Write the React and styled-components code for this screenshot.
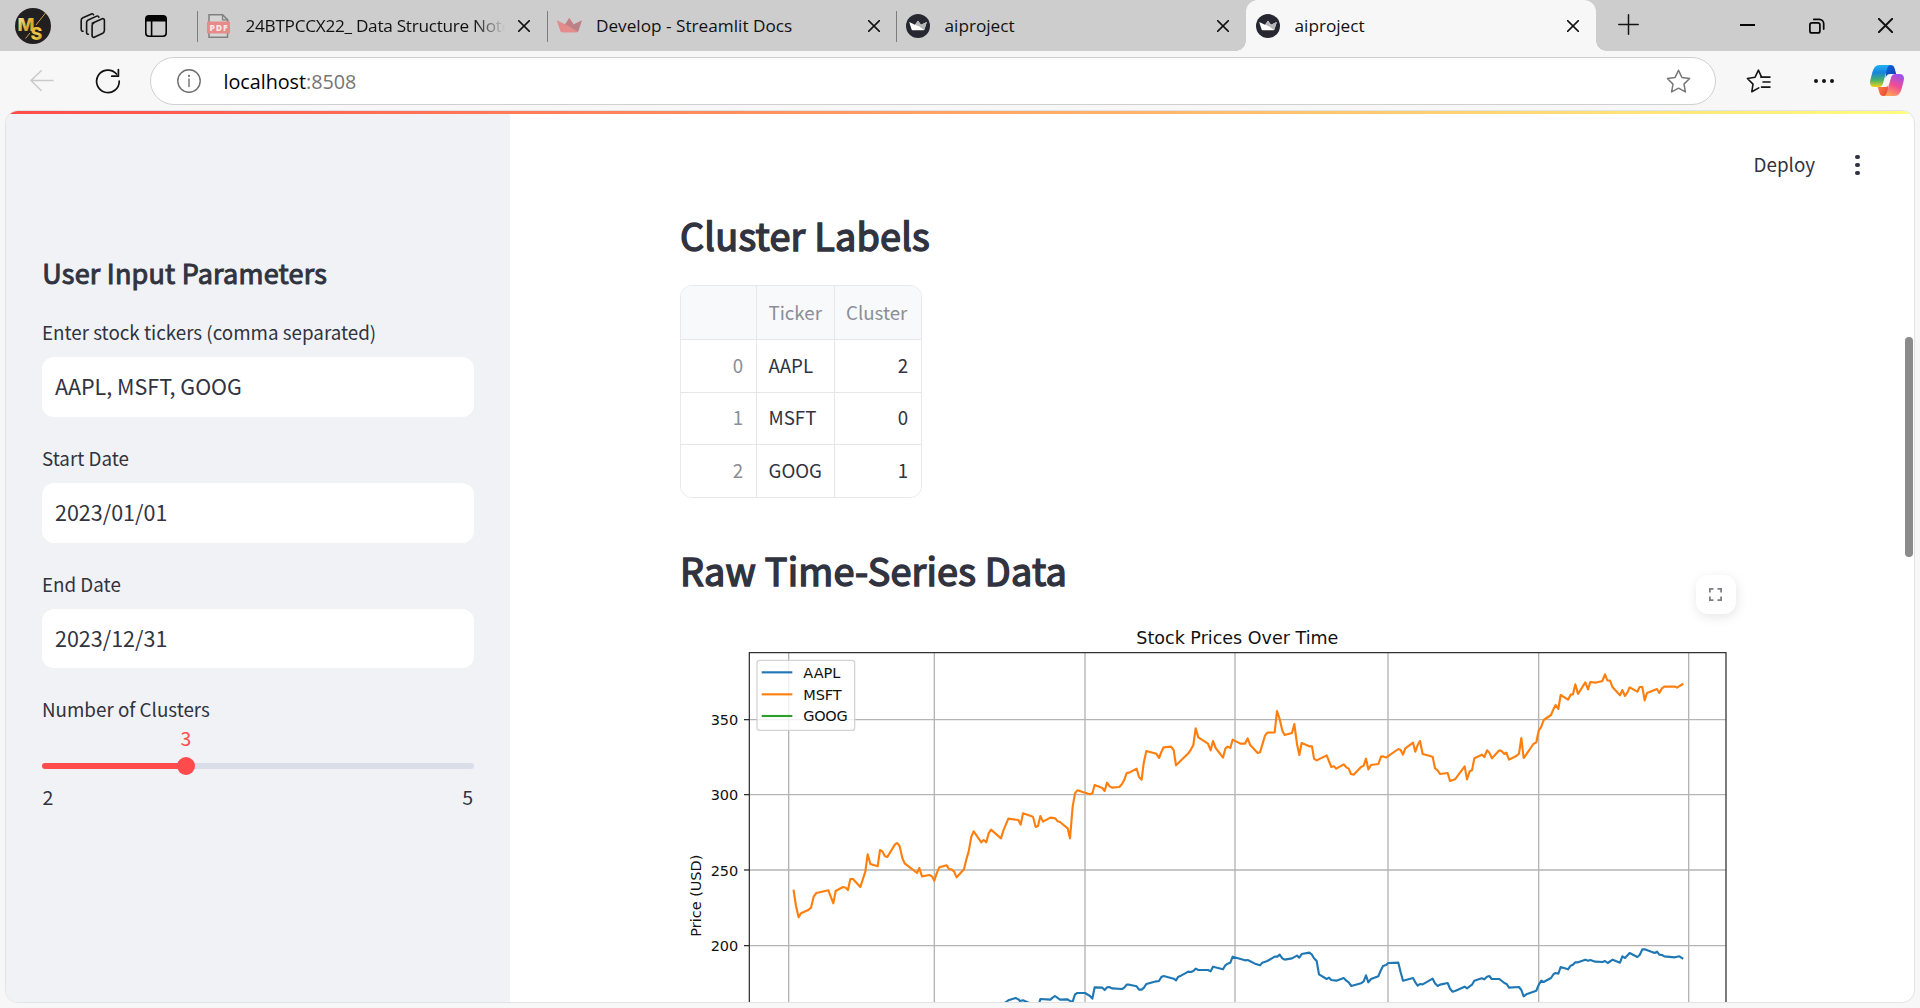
import React from "react";
import styled, { createGlobalStyle } from "styled-components";

const Global = createGlobalStyle`
  * { box-sizing: border-box; }
  html, body { margin: 0; padding: 0; }
  body { background: #f7f7f7; overflow: hidden; }
  svg { display: block; flex: none; }
`;

const ui = `"Open Sans", "Noto Sans", sans-serif`;
const app = `"Noto Sans CJK SC", "Noto Sans", sans-serif`;

/* ---------- browser window ---------- */

const Window = styled.div`
  width: 1920px;
  height: 1008px;
  display: flex;
  flex-direction: column;
  background: #f7f7f7;
  overflow: hidden;
  font-family: ${ui};
`;

const TabStrip = styled.div`
  height: 51px;
  flex: none;
  display: flex;
  background: #cdcdcd;
`;

const StripTools = styled.div`
  width: 197px;
  padding: 8px 0 0 15px;
  display: flex;
  align-items: flex-start;
`;

const ToolSlot = styled.div`
  width: ${(p) => p.$w}px;
  margin-left: ${(p) => p.$ml || 0}px;
  padding-left: ${(p) => p.$pl || 0}px;
  padding-top: ${(p) => p.$top || 0}px;
`;

const Tab = styled.div`
  width: ${(p) => p.$w || 349.5}px;
  height: 51px;
  padding-left: 10px;
  display: flex;
  align-items: center;
  position: relative;
  background: ${(p) => (p.$active ? "#f7f7f7" : "transparent")};
  border-radius: ${(p) => (p.$active ? "12px 12px 0 0" : "0")};
  &::before {
    content: "";
    display: ${(p) => (p.$active ? "none" : "block")};
    position: absolute;
    left: 0;
    top: 11px;
    width: 1px;
    height: 31px;
    background: #7d7d7d;
  }
`;

const Flare = styled.i`
  position: absolute;
  bottom: 0;
  ${(p) => (p.$side === "left" ? "left: -10px;" : "right: -10px;")}
  width: 10px;
  height: 10px;
  background: radial-gradient(circle at ${(p) => (p.$side === "left" ? "0 0" : "100% 0")}, #cdcdcd 9.5px, #f7f7f7 10px);
`;

const TabTitle = styled.div`
  width: ${(p) => p.$w || 260}px;
  margin-left: ${(p) => p.$ml || 14}px;
  font-size: 17.2px;
  letter-spacing: ${(p) => p.$ls || 0}px;
  line-height: 26px;
  padding-top: 1px;
  color: #111;
  white-space: nowrap;
  overflow: hidden;
  ${(p) => p.$fade && "-webkit-mask-image: linear-gradient(90deg, #000 88%, transparent 100%);"}
`;

const TabClose = styled.div`
  margin-left: ${(p) => p.$ml || 12}px;
`;

const StripEnd = styled.div`
  flex: 1;
  display: flex;
  align-items: flex-start;
`;

const Toolbar = styled.div`
  height: 59px;
  flex: none;
  display: flex;
  align-items: center;
  background: #f7f7f7;
`;

const Omnibox = styled.div`
  width: 1566px;
  height: 48px;
  margin-left: 29px;
  margin-top: 1px;
  padding: 0 24px 0 26px;
  display: flex;
  align-items: center;
  background: #fff;
  border: 1px solid #d0d0d0;
  border-radius: 24px;
`;

const Address = styled.div`
  flex: 1;
  margin-left: 22.5px;
  padding-top: 1px;
  font-size: 19.8px;
  letter-spacing: -0.04px;
  line-height: 28px;
  color: #000;
  span { color: #757575; }
`;

const Page = styled.div`
  width: 1910px;
  height: 893px;
  margin-left: 5px;
  flex: none;
  display: flex;
  flex-direction: column;
  position: relative;
  border: 1px solid #e1e3e5;
  border-radius: 13px;
  overflow: hidden;
  background: #fff;
  font-family: ${app};
  color: #31333f;
`;

const Decoration = styled.div`
  height: 3px;
  flex: none;
  background: linear-gradient(90deg, rgb(255, 75, 75), rgb(255, 253, 128));
`;

const Body = styled.div`
  flex: 1;
  min-height: 0;
  display: flex;
`;

const ScrollThumb = styled.div`
  position: absolute;
  right: 1px;
  top: 226px;
  width: 8px;
  height: 220px;
  border-radius: 4px;
  background: #8b8b8b;
`;

/* ---------- sidebar ---------- */

const Sidebar = styled.aside`
  width: 504px;
  flex: none;
  padding: 141px 36px 0;
  background: #f0f2f6;
`;

const SideTitle = styled.h2`
  margin: 0 0 26px;
  padding-left: 0.3px;
  font-size: 27px;
  line-height: 36px;
  font-weight: 400;
  letter-spacing: 0.2px;
  -webkit-text-stroke: 1px #31333f;
  white-space: nowrap;
`;

const Field = styled.div`
  margin-bottom: ${(p) => p.$mb || 26}px;
`;

const Label = styled.div`
  margin-bottom: ${(p) => (p.$tight ? 0 : 10)}px;
  font-size: 18.8px;
  line-height: 30px;
  white-space: nowrap;
`;

const Input = styled.div`
  height: ${(p) => p.$h || 60}px;
  padding: 0 13px 3px;
  display: flex;
  align-items: center;
  border-radius: 12px;
  background: #fff;
  font-size: 21.5px;
`;

const SliderValue = styled.div`
  width: 288px;
  font-size: 19.4px;
  line-height: 28px;
  text-align: center;
  color: #ff4b4b;
`;

const Track = styled.div`
  height: 6px;
  margin: 11px 0 14px;
  border-radius: 3px;
  background: linear-gradient(90deg, #ff4b4b 33.33%, #d9dee9 33.33%);
  position: relative;
`;

const Knob = styled.div`
  position: absolute;
  left: 135px;
  top: -6px;
  width: 18px;
  height: 18px;
  border-radius: 50%;
  background: #ff4b4b;
`;

const Range = styled.div`
  display: flex;
  justify-content: space-between;
  padding: 0 1px 0 0.5px;
  font-size: 19.6px;
  line-height: 28px;
`;

/* ---------- main column ---------- */

const Main = styled.main`
  flex: 1;
  min-width: 0;
  display: flex;
  flex-direction: column;
`;

const Header = styled.header`
  height: 90px;
  flex: none;
  padding: 35px 55px 0 0;
  display: flex;
  justify-content: flex-end;
  font-size: 18.8px;
  line-height: 30px;
`;

const Dots = styled.div`
  width: 4px;
  margin-left: 40px;
  padding-top: 5.5px;
  display: flex;
  flex-direction: column;
  gap: 3.5px;
  i { width: 4.5px; height: 4.5px; border-radius: 50%; background: #31333f; }
`;

const Content = styled.div`
  width: 1056px;
  margin-left: 170px;
  position: relative;
`;

const Heading = styled.h2`
  margin: ${(p) => p.$top || 0}px 0 0;
  font-size: 37.8px;
  line-height: 50px;
  font-weight: 400;
  letter-spacing: 0.22px;
  -webkit-text-stroke: 1.5px #31333f;
  white-space: nowrap;
`;

const Table = styled.div`
  width: 242px;
  margin-top: 25px;
  display: grid;
  grid-template-columns: 76px 78px 1fr;
  grid-template-rows: 54px 52.5px 52.5px 52px;
  border: 1px solid #e8e9eb;
  border-radius: 12px;
  overflow: hidden;
  font-size: 18.7px;
`;

const Cell = styled.div`
  display: flex;
  align-items: center;
  justify-content: ${(p) => (p.$right ? "flex-end" : "flex-start")};
  padding: 0 13px 3px ${(p) => (p.$lastCol ? 11 : 11.5)}px;
  background: ${(p) => (p.$head ? "#f8f9fb" : "#fff")};
  color: ${(p) => (p.$muted ? "#8b8e96" : "#31333f")};
  border-right: ${(p) => (p.$lastCol ? "0" : "1px solid #e5e6e9")};
  border-bottom: ${(p) => (p.$lastRow ? "0" : "1px solid #e5e6e9")};
`;

const Fullscreen = styled.button`
  position: absolute;
  left: 1016px;
  top: 371px;
  width: 40px;
  height: 39px;
  padding: 0 1px 0 0;
  border: 0;
  border-radius: 12px;
  background: #fff;
  box-shadow: 1px 3px 12px rgba(0, 0, 0, 0.1);
  display: flex;
  align-items: center;
  justify-content: center;
`;

const ChartBox = styled.div`
  margin-top: 25px;
  height: 382px;
`;

/* ---------- icons ---------- */

const Cross = ({ size = 12, w = 1.5 }) => (
  <svg width={size} height={size} viewBox="0 0 12 12" stroke="#111" strokeWidth={w} strokeLinecap="round">
    <path d="M.6.6 11.4 11.4M11.4.6.6 11.4" />
  </svg>
);

const Profile = () => (
  <svg width="36" height="36" viewBox="0 0 36 36">
    <defs>
      <linearGradient id="gold" x1="0" y1="0" x2="1" y2="1">
        <stop offset="0" stopColor="#fff3a0" />
        <stop offset=".45" stopColor="#d9a32c" />
        <stop offset=".75" stopColor="#f3cf4c" />
        <stop offset="1" stopColor="#a66f12" />
      </linearGradient>
    </defs>
    <circle cx="18" cy="18" r="18" fill="#221f20" />
    <text fontFamily="Inter, sans-serif" fontWeight="800" fontSize="18" fill="url(#gold)">
      <tspan x="2.500" y="22.500">M</tspan>
      <tspan x="15.500" y="32">S</tspan>
    </text>
    <path d="M28 7 21 16" stroke="#221f20" strokeWidth="2.400" />
    <path d="M30.500 5 21 17M15 25 10.500 30.500" stroke="#d0a33a" strokeWidth="1" />
  </svg>
);

const Workspaces = () => (
  <svg width="26" height="26" viewBox="0 0 26 26" fill="none" stroke="#151515" strokeWidth="1.6" strokeLinejoin="round" strokeLinecap="round">
    <path d="M12.200 10.200 22.300 5.800a1.500 1.500 0 0 1 2.100 1.400v10.400a3 3 0 0 1-1.600 2.600l-8.600 4a1.500 1.500 0 0 1-2.100-1.300V12.600a2.800 2.800 0 0 1 1.700-2.600z" />
    <path d="M18.800 4.100a1.500 1.500 0 0 0-2.100-1L8.200 7a2.800 2.800 0 0 0-1.600 2.600v10.200c0 1 .8 1.600 1.800 1.500" />
    <path d="M13.500 1.700a1.500 1.500 0 0 0-2-.8L2.900 4.800A2.800 2.800 0 0 0 1.200 7.400v9.200c0 1 .8 1.700 1.900 1.600" />
  </svg>
);

const TabActions = () => (
  <svg width="22" height="22" viewBox="0 0 22 22" fill="none">
    <rect x=".8" y=".8" width="20.400" height="20.400" rx="3.200" stroke="#050505" strokeWidth="1.600" />
    <path d="M.8 6.500V4A3.200 3.200 0 0 1 4 .8h14A3.200 3.200 0 0 1 21.200 4v2.500z" fill="#050505" />
    <path d="M6.600 6v15" stroke="#050505" strokeWidth="1.600" />
  </svg>
);

const Pdf = () => (
  <svg width="23" height="24" viewBox="0 0 23 24">
    <path d="M2 .8h13.500l5 5V23.200H2z" fill="#d6d6d6" stroke="#808080" strokeWidth="1.500" />
    <path d="M15.500.8v5h5z" fill="#cdcdcd" stroke="#808080" strokeWidth="1.300" />
    <rect x="0" y="7.500" width="23" height="12" rx=".8" fill="#e68a8a" />
    <text x="2.400" y="16.700" fontFamily="Open Sans, sans-serif" fontWeight="800" fontSize="8.600" textLength="18.200" fill="#f6e4e4">PDF</text>
  </svg>
);

const Crown = () => (
  <svg width="25" height="15" viewBox="0 0 25 15">
    <path d="M0 2.500 8 6.500 12.300 0 16.600 6.500 24.800 2.500 21.300 13q-.4 1.200-1.800 1.200H5.300q-1.400 0-1.800-1.200z" fill="#e48c8c" />
    <path d="M12.300 0 16.600 6.500 13 9 8 6.500z" fill="#c08088" />
    <path d="M24.800 2.500 16.600 6.500 13 9l7.500 5q.6-.3.8-1z" fill="#b98188" />
    <path d="M0 2.500 13 9 21 13.800q-.5.400-1.500.4H5.300q-1.400 0-1.800-1.200z" fill="#e48b8b" />
  </svg>
);

const CrownBadge = () => (
  <svg width="24" height="24" viewBox="0 0 24 24">
    <circle cx="12" cy="12" r="12" fill="#262730" />
    <path d="M3.200 8 9 10.800 12 6.700 15 10.800 20.800 8 18.400 15.500q-.2.700-1 .7H6.600q-.8 0-1-.7z" fill="#fff" />
    <path d="M20.800 8 15 10.800l-2 1.400 5 3.800q.3-.2.400-.5zM12 6.700 15 10.800l-2 1.400-4-1.400z" fill="#b5b5b9" />
  </svg>
);

const Plus = () => (
  <svg width="21" height="21" viewBox="0 0 21 21" stroke="#151515" strokeWidth="1.500" strokeLinecap="round">
    <path d="M10.500.8v19.400M.8 10.500h19.400" />
  </svg>
);

const Restore = () => (
  <svg width="16" height="16" viewBox="0 0 16 16" fill="none" stroke="#050505" strokeWidth="1.700" strokeLinecap="round">
    <rect x=".9" y="4.900" width="10" height="10" rx="2" />
    <path d="M4.800 1.400h5.500a4.400 4.400 0 0 1 4.400 4.400v5.300" />
  </svg>
);

const Back = () => (
  <svg width="24" height="22" viewBox="0 0 24 22" fill="none" stroke="#cacaca" strokeWidth="1.500" strokeLinecap="round" strokeLinejoin="round">
    <path d="M23 10.500H1M11.200.8 1 10.500l10.200 10" />
  </svg>
);

const Reload = () => (
  <svg width="26" height="26" viewBox="0 0 26 26" fill="none" stroke="#111" strokeWidth="1.700" strokeLinecap="round" strokeLinejoin="round">
    <path d="M24.200 13A11.300 11.300 0 1 1 21.500 6" />
    <path d="M23.400 1.600v6.600h-6.600" />
  </svg>
);

const Info = () => (
  <svg width="24" height="24" viewBox="0 0 24 24" fill="none" stroke="#6e6e6e" strokeWidth="1.400">
    <circle cx="12" cy="12" r="11.200" />
    <path d="M12 10v7.600" strokeLinecap="round" />
    <circle cx="12" cy="6.900" r="1.100" fill="#6e6e6e" stroke="none" />
  </svg>
);

const Star = () => (
  <svg width="25" height="24" viewBox="0 0 25 24" fill="none" stroke="#777" strokeWidth="1.500" strokeLinejoin="round">
    <path d="M12.500 1.200 15.900 8.400 23.600 9.500 18 15.100 19.400 22.900 12.500 19.200 5.600 22.900 7 15.100 1.400 9.500 9.100 8.400z" />
  </svg>
);

const Favorites = () => (
  <svg width="25" height="24" viewBox="0 0 25 24" fill="none" stroke="#151515" strokeWidth="1.600" strokeLinejoin="round" strokeLinecap="round">
    <path d="M15.600 8.100 12.400 1.200 9.100 8.200 1.400 9.500 7 15.100 5.800 22.800 12.800 18.900" />
    <path d="M14.800 8.100h9.200M17 13h7M15.500 18.100h8.500" />
  </svg>
);

const Copilot = () => (
  <svg width="34" height="31" viewBox="0 0 34 31">
    <defs>
      <linearGradient id="cpA" x1="0" y1="0" x2="0" y2="1">
        <stop offset="0" stopColor="#1fb2f5" />
        <stop offset=".35" stopColor="#1784dc" />
        <stop offset=".68" stopColor="#45b16c" />
        <stop offset="1" stopColor="#f2cf15" />
      </linearGradient>
      <linearGradient id="cpB" x1=".7" y1="0" x2=".3" y2="1">
        <stop offset="0" stopColor="#9c50f0" />
        <stop offset=".5" stopColor="#ee4d95" />
        <stop offset="1" stopColor="#ffa356" />
      </linearGradient>
      <linearGradient id="cpC" x1="0" y1="0" x2="1" y2="1">
        <stop offset="0" stopColor="#0a68d8" />
        <stop offset="1" stopColor="#1737b5" />
      </linearGradient>
      <linearGradient id="cpD" x1="0" y1="0" x2="1" y2="1">
        <stop offset="0" stopColor="#ff8f42" />
        <stop offset="1" stopColor="#e63b3b" />
      </linearGradient>
    </defs>
    <path d="M16 0h4.500c2.600 0 3.600 1.500 4.300 4l1.400 5h-5.700c-3 0-4 1.200-4.800 4z" fill="url(#cpC)" />
    <path d="M18 31h-4.500c-2.600 0-3.600-1.500-4.300-4l-1.500-5h5.800c3 0 4-1.200 4.800-4z" fill="url(#cpD)" />
    <path d="M20 0H9.500C5.500 0 3.600 3 2.300 7.500L.6 14c-1.500 5-.2 8 4 8h3.700c3 0 4-1.400 4.800-4l3.500-12.500C17.400 2.400 18 .5 20 0z" fill="url(#cpA)" />
    <path d="M14 31h10.500c4 0 5.900-3 7.200-7.500l1.700-6.500c1.500-5 .2-8-4-8h-3.700c-3 0-4 1.400-4.800 4l-3.500 12.500C16.600 28.600 16 30.500 14 31z" fill="url(#cpB)" />
    <path d="M18.500 10.500h3.200c-.8.600-1.100 1.600-1.500 3l-2 7c-.4 1-1 1.300-2.200 1.300h-3.200c1.200-.8 1.500-2 2-3.600l1.600-5.600c.4-1.300.9-2.100 2.100-2.100z" fill="#f7f7f7" />
  </svg>
);

/* ---------- chart ---------- */

// Each run of points is relative to its own origin; the plot uses three units per pixel.
const join = (runs) =>
  runs
    .map(([ox, oy, pts]) =>
      pts.trim().split(/\s+/).map((p) => {
        const [x, y] = p.split(",").map(Number);
        return `${x + ox},${y + oy}`;
      }).join(" ")
    )
    .join(" ");

const MSFT = join([
  [2040, 1890, `341,782 348,828 356,862 363,850 385,840 393,833 401,800 409,789 445,781 460,820 467,783 489,771 497,773 504,780 511,747 519,747 541,771 556,725 563,673 571,702 593,709 600,660 607,664 615,679 622,681 645,643 652,639 659,649 667,684 674,700 711,729 718,714 726,739 748,735 756,739 763,752 770,730 778,712 800,706 807,717 814,718 822,724 830,742 852,718 859,688 866,665 874,620 881,604 904,637 911,630 919,637 926,610 933,599 963,625 970,602 985,566 1015,570 1022,584 1029,550 1059,560 1067,591 1074,588 1081,558 1089,575 1111,563 1126,565 1133,574 1140,576 1163,595 1170,625`],
  [3180, 1890, `38,530 45,490 52,481 75,488 90,493 97,490 104,465 127,474 134,483 141,458 149,469 156,473 178,471 186,462 193,449 200,429 208,428 230,416 237,441 245,449 251,400 259,363 289,371 297,384 304,366 311,352 333,350 341,360 348,406 385,370 393,358 400,345 407,295 415,322 444,341 452,361 459,333 467,354 489,383 496,356 503,350 511,354 518,329 541,341 555,341 563,325 570,344 593,369 600,367 607,344 615,317 622,308 644,307 651,243 659,267 667,302 674,315 696,309 703,282 711,342 718,375 725,339 748,349 756,349 762,386 770,391 800,376 814,411 822,409 829,416 851,403 859,412 866,416 873,432 881,434 903,411 911,407 918,386 925,418 933,405 955,402 963,380 970,379 978,383 1015,357 1022,360 1029,374 1036,355 1059,338 1066,365 1073,345 1080,333 1088,372 1118,380 1125,415 1133,421 1140,432 1163,429 1170,453 1185,448 1214,409 1221,448 1229,424 1236,421`],
  [4200, 1680, `223,595 246,584 253,591 261,571 268,578 276,595 298,571 306,574 313,582 319,578 327,599 349,588 357,581 364,534 371,594 379,583 400,552 409,547 416,512 424,500 431,480 453,465 461,446 467,435 475,447 482,405 504,419 512,404 519,403 526,373 534,402 556,367 564,388 571,366 586,368 607,363 615,343 622,361 630,362 638,382 660,406 667,390 675,408 682,398 689,382 712,395 719,381 727,381 734,421 741,399 771,387 778,399 786,385 793,380 825,380 831,383 847,373`],
]);

const AAPL = join([
  [2040, 1890, `970,1122 985,1111 1007,1104 1015,1108 1020,1113 1029,1111 1048,1119 1077,1122 1081,1107 1111,1109 1118,1103 1125,1098 1140,1109 1163,1108 1170,1113 1178,1115`],
  [3180, 1890, `45,1093 52,1089 75,1089 90,1098 97,1106 104,1072 127,1073 134,1080 141,1072 148,1071 156,1075 186,1077 193,1073 200,1064 208,1064 230,1069 237,1079 245,1079 252,1073 259,1062 289,1054 297,1053 304,1041 311,1038 341,1046 348,1051 355,1040 363,1037 385,1025 393,1026 400,1023 407,1016 415,1020 444,1020 452,1024 459,1010 489,1018 496,1006 503,1001 511,998 518,980 555,991 563,990 585,1001 600,1006 607,998 622,993 644,980 652,980 659,974 667,985 674,989 696,985 711,977 718,983 725,972 748,968 755,973 762,985 770,993 777,1033 800,1047 807,1043 814,1050 829,1052 851,1044 859,1052 866,1057 874,1068 903,1060 911,1054 918,1036 925,1057 933,1047 955,1039 962,1022 969,1008 978,1005 985,999 1015,998 1022,1027 1029,1052 1059,1044 1066,1057 1073,1067 1080,1062 1088,1063 1118,1046 1125,1060 1133,1068 1140,1064 1163,1059 1170,1076 1178,1085 1185,1083 1214,1070 1221,1075 1236,1064`],
  [4200, 1680, `223,1262 245,1255 253,1258 261,1250 268,1248 275,1257 298,1257 313,1269 320,1272 327,1283 357,1281 364,1290 371,1309 379,1303 409,1292 416,1275 424,1262 431,1266 453,1254 461,1242 467,1239 475,1241 482,1221 504,1228 512,1217 519,1214 526,1207 534,1207 556,1199 564,1202 571,1200 586,1205 608,1206 615,1203 623,1209 638,1199 660,1208 667,1189 675,1194 689,1179 712,1191 719,1185 727,1168 734,1168 764,1179 771,1175 778,1184 786,1185 793,1189 825,1192 838,1189 847,1195`],
]);

const ROWS = [[2159, "350"], [2384, "300"], [2610, "250"], [2837, "200"]];
const COLS = [2366, 2803, 3255, 3705, 4164, 4616, 5066];
const LEGEND = [["AAPL", "#1f77b4", 2017, 109], ["MSFT", "#ff7f0e", 2083, 113], ["GOOG", "#2ca02c", 2148, 131]];

const Chart = () => (
  <svg width="1056" height="382" viewBox="2040 1860 3168 1146" fontFamily="DejaVu Sans, sans-serif" fill="#111">
    <g stroke="#b0b0b0" strokeWidth="4" opacity=".95">
      {COLS.map((x) => <path key={x} d={`M${x} 1958V3020`} />)}
      {ROWS.map(([y]) => <path key={y} d={`M2248 ${y}H5178`} />)}
    </g>
    <g fill="none" strokeWidth="6.400" strokeLinejoin="round" strokeLinecap="square">
      <polyline points={AAPL} stroke="#1f77b4" />
      <polyline points={MSFT} stroke="#ff7f0e" />
    </g>
    <path d="M2248 3020V1958H5178V3020" fill="none" stroke="#333" strokeWidth="3.800" />
    {ROWS.map(([y, t]) => (
      <g key={t}>
        <path d={`M2232 ${y}H2248`} stroke="#222" strokeWidth="3.600" />
        <text x="2215" y={y + 17} textAnchor="end" fontSize="43.500">{t}</text>
      </g>
    ))}
    <text x="3712" y="1932" textAnchor="middle" fontSize="52.600" textLength="606">Stock Prices Over Time</text>
    <text transform="translate(2104 2687) rotate(-90)" textAnchor="middle" fontSize="43.500" textLength="246">Price (USD)</text>
    <rect x="2271" y="1981" width="293" height="210" rx="8" fill="#fff" fillOpacity=".8" stroke="#ccc" strokeOpacity=".85" strokeWidth="4" />
    {LEGEND.map(([name, color, y, w]) => (
      <g key={name}>
        <path d={`M2285 ${y}H2377`} stroke={color} strokeWidth="6.400" />
        <text x="2410" y={y + 16} fontSize="43.500" textLength={w + 2}>{name}</text>
      </g>
    ))}
  </svg>
);

const DATA = [["0", "AAPL", "2"], ["1", "MSFT", "0"], ["2", "GOOG", "1"]];

export default function App() {
  return (
    <Window>
      <Global />
      <TabStrip>
        <StripTools>
          <ToolSlot $w={65}><Profile /></ToolSlot>
          <ToolSlot $w={65} $top={5}><Workspaces /></ToolSlot>
          <ToolSlot $w={22} $top={7}><TabActions /></ToolSlot>
        </StripTools>
        <Tab $w={350}>
          <Pdf />
          <TabTitle $ml={15.5} $w={259.5} $fade $ls={-0.28}>24BTPCCX22_ Data Structure Notes</TabTitle>
          <TabClose $ml={13}><Cross /></TabClose>
        </Tab>
        <Tab $w={349}>
          <Crown />
          <TabTitle $w={257}>Develop - Streamlit Docs</TabTitle>
          <TabClose $ml={14.5}><Cross /></TabClose>
        </Tab>
        <Tab $w={350}>
          <CrownBadge />
          <TabTitle $w={257} $ml={14.5}>aiproject</TabTitle>
          <TabClose $ml={15.5}><Cross /></TabClose>
        </Tab>
        <Tab $w={350} $active>
          <Flare $side="left" />
          <CrownBadge />
          <TabTitle $w={257} $ml={14.5}>aiproject</TabTitle>
          <TabClose $ml={15.5}><Cross /></TabClose>
          <Flare $side="right" />
        </Tab>
        <StripEnd>
          <ToolSlot $w={144} $top={14} $pl={22}><Plus /></ToolSlot>
          <ToolSlot $w={69} $top={24}>
            <svg width="15" height="2" viewBox="0 0 15 2"><rect width="15" height="2" fill="#050505" /></svg>
          </ToolSlot>
          <ToolSlot $w={69} $top={18}><Restore /></ToolSlot>
          <ToolSlot $w={20} $top={18}><Cross size={15} w={1.5} /></ToolSlot>
        </StripEnd>
      </TabStrip>

      <Toolbar>
        <ToolSlot $w={65} $ml={30}><Back /></ToolSlot>
        <ToolSlot $w={26}><Reload /></ToolSlot>
        <Omnibox>
          <Info />
          <Address>localhost<span>:8508</span></Address>
          <Star />
        </Omnibox>
        <ToolSlot $w={68} $ml={29.5}><Favorites /></ToolSlot>
        <ToolSlot $w={56.5}>
          <svg width="20" height="4" viewBox="0 0 20 4" fill="#151515">
            <circle cx="2" cy="2" r="2" /><circle cx="10" cy="2" r="2" /><circle cx="18" cy="2" r="2" />
          </svg>
        </ToolSlot>
        <Copilot />
      </Toolbar>

      <Page>
        <Decoration />
        <Body>
          <Sidebar>
            <SideTitle>User Input Parameters</SideTitle>
            <Field>
              <Label>Enter stock tickers (comma separated)</Label>
              <Input>AAPL, MSFT, GOOG</Input>
            </Field>
            <Field>
              <Label>Start Date</Label>
              <Input>2023/01/01</Input>
            </Field>
            <Field>
              <Label>End Date</Label>
              <Input $h={59}>2023/12/31</Input>
            </Field>
            <Field>
              <Label $tight>Number of Clusters</Label>
              <SliderValue>3</SliderValue>
              <Track><Knob /></Track>
              <Range><span>2</span><span>5</span></Range>
            </Field>
          </Sidebar>
          <Main>
            <Header>
              <span>Deploy</span>
              <Dots><i /><i /><i /></Dots>
            </Header>
            <Content>
              <Heading $top={6}>Cluster Labels</Heading>
              <Table>
                <Cell $head />
                <Cell $head $muted>Ticker</Cell>
                <Cell $head $muted $lastCol>Cluster</Cell>
                {DATA.map(([i, name, cluster], r) => (
                  <React.Fragment key={i}>
                    <Cell $right $muted $lastRow={r === 2}>{i}</Cell>
                    <Cell $lastRow={r === 2}>{name}</Cell>
                    <Cell $right $lastCol $lastRow={r === 2}>{cluster}</Cell>
                  </React.Fragment>
                ))}
              </Table>
              <Heading $top={47}>Raw Time-Series Data</Heading>
              <ChartBox><Chart /></ChartBox>
              <Fullscreen>
                <svg width="13" height="13" viewBox="0 0 13 13" fill="none" stroke="#7d7f87" strokeWidth="1.800">
                  <path d="M.9 4.500V.9h3.600M8.500.9h3.600v3.600M12.100 8.500v3.600H8.500M4.500 12.100H.9V8.500" />
                </svg>
              </Fullscreen>
            </Content>
          </Main>
        </Body>
        <ScrollThumb />
      </Page>
    </Window>
  );
}
